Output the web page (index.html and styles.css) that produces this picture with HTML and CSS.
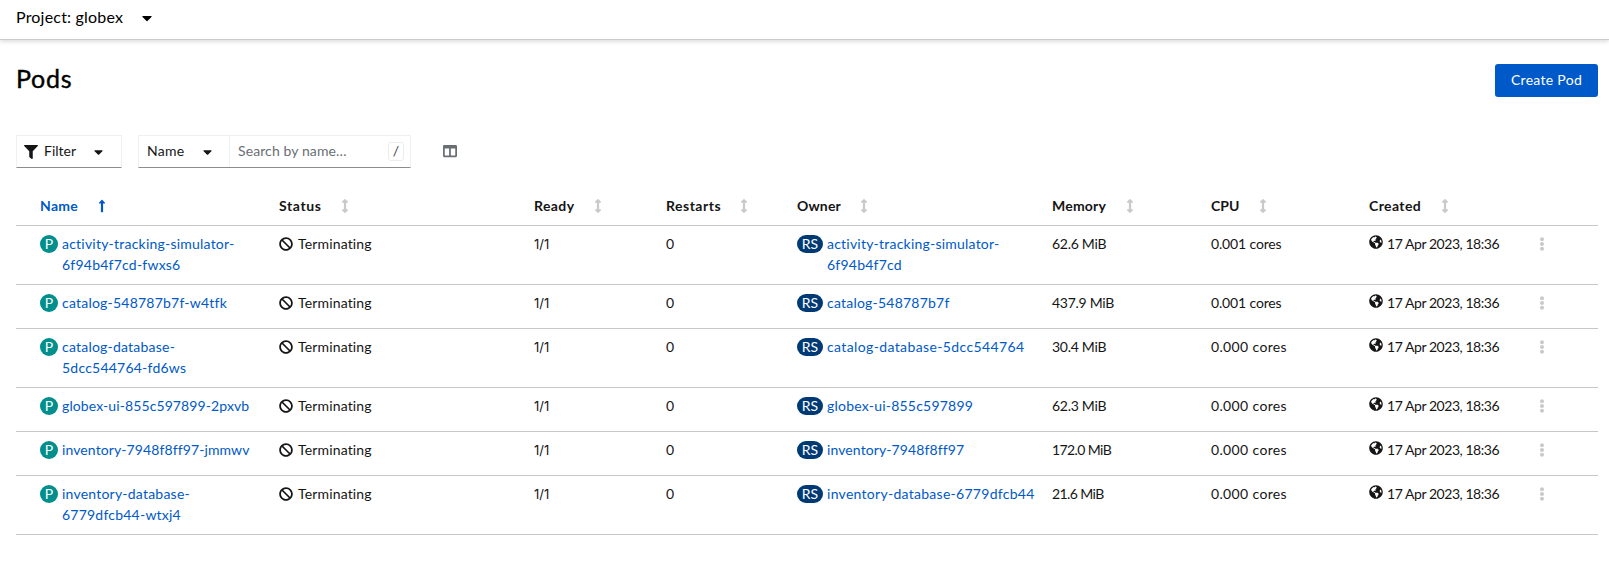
FILE: index.html
```
<!DOCTYPE html>
<html lang="en">
<head>
<meta charset="utf-8">
<title>Pods</title>
<link rel="stylesheet" href="styles.css">
</head>
<body>
<svg class="sprite" aria-hidden="true">
  <symbol id="caret" viewBox="0 0 320 512"><path d="M31.3 192h257.3c17.8 0 26.7 21.5 14.1 34.1L174.1 354.8c-7.8 7.8-20.5 7.8-28.3 0L17.2 226.1C4.6 213.5 13.5 192 31.3 192z"/></symbol>
  <symbol id="filter" viewBox="0 0 512 512"><path d="M487.976 0H24.028C2.71 0-8.047 25.866 7.058 40.971L192 225.941V432c0 7.831 3.821 15.17 10.237 19.662l80 55.98C298.02 518.69 320 507.493 320 487.98V225.941l184.947-184.97C520.021 25.896 509.338 0 487.976 0z"/></symbol>
  <symbol id="columns" viewBox="0 0 512 512"><path d="M464 32H48C21.490 32 0 53.490 0 80v352c0 26.510 21.490 48 48 48h416c26.510 0 48-21.490 48-48V80c0-26.510-21.490-48-48-48zM224 416H64V160h160v256zm224 0H288V160h160v256z"/></symbol>
  <symbol id="up" viewBox="0 0 256 512"><path d="M88 166.059V468c0 6.627 5.373 12 12 12h56c6.627 0 12-5.373 12-12V166.059h46.059c21.382 0 32.090-25.851 16.971-40.971l-86.059-86.059c-9.373-9.373-24.569-9.373-33.941 0l-86.059 86.059c-15.119 15.119-4.411 40.971 16.971 40.971H88z"/></symbol>
  <symbol id="updown" viewBox="0 0 256 512"><path d="M214.059 377.941H168V134.059h46.059c21.382 0 32.090-25.851 16.971-40.971L144.971 7.029c-9.373-9.373-24.568-9.373-33.941 0L24.971 93.088c-15.119 15.119-4.411 40.971 16.971 40.971H88v243.882H41.941c-21.382 0-32.090 25.851-16.971 40.971l86.059 86.059c9.373 9.373 24.568 9.373 33.941 0l86.059-86.059c15.120-15.119 4.412-40.971-16.970-40.971z"/></symbol>
  <symbol id="ban" viewBox="0 0 512 512"><path d="M256 8C119.034 8 8 119.033 8 256s111.034 248 248 248 248-111.034 248-248S392.967 8 256 8zm130.108 117.892c65.448 65.448 70 165.481 20.677 235.637L150.470 105.216c70.204-49.356 170.226-44.735 235.638 20.676zM125.892 386.108c-65.448-65.448-70-165.481-20.677-235.637L361.530 406.784c-70.203 49.356-170.226 44.736-235.638-20.676z"/></symbol>
  <symbol id="globe" viewBox="0 0 496 512"><path d="M248 8C111.030 8 0 119.030 0 256s111.030 248 248 248 248-111.030 248-248S384.970 8 248 8zm82.290 357.600c-3.900 3.880-7.990 7.950-11.310 11.280-2.990 3-5.100 6.700-6.170 10.710-1.510 5.660-2.730 11.380-4.770 16.870l-17.390 46.850c-13.760 3-28 4.690-42.650 4.690v-27.380c1.690-12.620-7.640-36.260-22.630-51.250-6-6-9.370-14.140-9.370-22.630v-32.010c0-11.640-6.270-22.340-16.460-27.970-14.370-7.950-34.810-19.060-48.810-26.110-11.480-5.780-22.100-13.140-31.650-21.750l-.8-.72a114.792 114.792 0 0 1-18.060-20.740c-9.380-13.770-24.660-36.420-34.590-51.140 20.470-45.500 57.360-82.040 103.200-101.890l24.010 12.010C203.480 89.740 216 82.010 216 70.110v-11.300c7.990-1.290 16.120-2.110 24.390-2.420l28.300 28.300c6.250 6.250 6.250 16.380 0 22.630L264 112l-10.340 10.340c-3.120 3.120-3.120 8.190 0 11.310l4.690 4.690c3.120 3.120 3.120 8.190 0 11.310l-8 8a8.008 8.008 0 0 1-5.660 2.340h-8.990c-2.080 0-4.080.81-5.580 2.270l-9.920 9.650a8.008 8.008 0 0 0-1.580 9.310l15.590 31.190c2.660 5.320-1.210 11.580-7.150 11.580h-5.640c-1.930 0-3.790-.7-5.240-1.960l-9.280-8.060a16.017 16.017 0 0 0-15.550-3.100l-31.170 10.390a11.950 11.950 0 0 0-8.170 11.340c0 4.530 2.560 8.660 6.610 10.690l11.080 5.540c9.410 4.710 19.790 7.160 30.310 7.160s22.590 27.290 32 32h66.750c8.490 0 16.620 3.370 22.630 9.370l13.690 13.690a30.503 30.503 0 0 1 8.930 21.570 46.536 46.536 0 0 1-13.720 32.980zM417 274.250c-5.790-1.450-10.840-5-14.150-9.970l-17.980-26.970a23.970 23.970 0 0 1 0-26.620l19.590-29.380c2.320-3.470 5.500-6.290 9.240-8.150l12.980-6.490C440.200 193.590 448 223.870 448 256c0 8.670-.74 17.160-1.820 25.540L417 274.250z"/></symbol>
  <symbol id="kebab" viewBox="0 0 192 512"><path d="M96 184c39.800 0 72 32.200 72 72s-32.200 72-72 72-72-32.200-72-72 32.200-72 72-72zM24 80c0 39.800 32.200 72 72 72s72-32.200 72-72S135.800 8 96 8 24 40.200 24 80zm0 352c0 39.800 32.200 72 72 72s72-32.200 72-72-32.200-72-72-72-72 32.200-72 72z"/></symbol>
</svg>

<div class="project-bar"><span class="project-name">Project: globex</span><svg class="caret caret-lg"><use href="#caret"/></svg></div>

<header class="page-header">
  <h1>Pods</h1>
  <button class="btn-primary">Create Pod</button>
</header>

<div class="toolbar">
  <div class="control filter"><svg class="i14"><use href="#filter"/></svg><span class="filter-label">Filter</span><svg class="caret"><use href="#caret"/></svg></div>
  <div class="control search">
    <div class="search-kind"><span>Name</span><svg class="caret"><use href="#caret"/></svg></div>
    <div class="search-field"><span class="placeholder">Search by name…</span><kbd>/</kbd></div>
  </div>
  <svg class="columns"><use href="#columns"/></svg>
</div>

<table class="pods">
  <colgroup><col class="c-name"><col class="c-status"><col class="c-ready"><col class="c-restarts"><col class="c-owner"><col class="c-memory"><col class="c-cpu"><col class="c-created"><col class="c-actions"></colgroup>
  <thead>
    <tr>
      <th class="sorted"><span class="h-name">Name</span><svg class="sort"><use href="#up"/></svg></th>
      <th><span class="h-status">Status</span><svg class="sort"><use href="#updown"/></svg></th>
      <th><span class="h-ready">Ready</span><svg class="sort"><use href="#updown"/></svg></th>
      <th><span class="h-restarts">Restarts</span><svg class="sort"><use href="#updown"/></svg></th>
      <th><span class="h-owner">Owner</span><svg class="sort"><use href="#updown"/></svg></th>
      <th><span class="h-memory">Memory</span><svg class="sort"><use href="#updown"/></svg></th>
      <th><span class="h-cpu">CPU</span><svg class="sort"><use href="#updown"/></svg></th>
      <th><span class="h-created">Created</span><svg class="sort"><use href="#updown"/></svg></th>
      <th></th>
    </tr>
  </thead>
  <tbody>
    <tr>
      <td><div class="res"><span class="badge pod">P</span><a>activity-tracking-simulator-<br>6f94b4f7cd-fwxs6</a></div></td>
      <td><div class="status"><svg class="i14"><use href="#ban"/></svg>Terminating</div></td>
      <td class="ready">1/1</td><td class="restarts">0</td>
      <td><div class="res"><span class="badge rs">RS</span><a>activity-tracking-simulator-<br>6f94b4f7cd</a></div></td>
      <td class="memory">62.6 MiB</td><td class="cpu narrow">0.001 cores</td>
      <td><div class="created"><svg class="i14"><use href="#globe"/></svg>17 Apr 2023, 18:36</div></td>
      <td><svg class="kebab"><use href="#kebab"/></svg></td>
    </tr>
    <tr>
      <td><div class="res"><span class="badge pod">P</span><a>catalog-548787b7f-w4tfk</a></div></td>
      <td><div class="status"><svg class="i14"><use href="#ban"/></svg>Terminating</div></td>
      <td class="ready">1/1</td><td class="restarts">0</td>
      <td><div class="res"><span class="badge rs">RS</span><a>catalog-548787b7f</a></div></td>
      <td class="memory">437.9 MiB</td><td class="cpu narrow">0.001 cores</td>
      <td><div class="created"><svg class="i14"><use href="#globe"/></svg>17 Apr 2023, 18:36</div></td>
      <td><svg class="kebab"><use href="#kebab"/></svg></td>
    </tr>
    <tr>
      <td><div class="res"><span class="badge pod">P</span><a>catalog-database-<br>5dcc544764-fd6ws</a></div></td>
      <td><div class="status"><svg class="i14"><use href="#ban"/></svg>Terminating</div></td>
      <td class="ready">1/1</td><td class="restarts">0</td>
      <td><div class="res"><span class="badge rs">RS</span><a class="wide">catalog-database-5dcc544764</a></div></td>
      <td class="memory">30.4 MiB</td><td class="cpu">0.000 cores</td>
      <td><div class="created"><svg class="i14"><use href="#globe"/></svg>17 Apr 2023, 18:36</div></td>
      <td><svg class="kebab"><use href="#kebab"/></svg></td>
    </tr>
    <tr>
      <td><div class="res"><span class="badge pod">P</span><a class="tight">globex-ui-855c597899-2pxvb</a></div></td>
      <td><div class="status"><svg class="i14"><use href="#ban"/></svg>Terminating</div></td>
      <td class="ready">1/1</td><td class="restarts">0</td>
      <td><div class="res"><span class="badge rs">RS</span><a>globex-ui-855c597899</a></div></td>
      <td class="memory">62.3 MiB</td><td class="cpu">0.000 cores</td>
      <td><div class="created"><svg class="i14"><use href="#globe"/></svg>17 Apr 2023, 18:36</div></td>
      <td><svg class="kebab"><use href="#kebab"/></svg></td>
    </tr>
    <tr>
      <td><div class="res"><span class="badge pod">P</span><a class="tight">inventory-7948f8ff97-jmmwv</a></div></td>
      <td><div class="status"><svg class="i14"><use href="#ban"/></svg>Terminating</div></td>
      <td class="ready">1/1</td><td class="restarts">0</td>
      <td><div class="res"><span class="badge rs">RS</span><a class="tight">inventory-7948f8ff97</a></div></td>
      <td class="memory narrow">172.0 MiB</td><td class="cpu">0.000 cores</td>
      <td><div class="created"><svg class="i14"><use href="#globe"/></svg>17 Apr 2023, 18:36</div></td>
      <td><svg class="kebab"><use href="#kebab"/></svg></td>
    </tr>
    <tr>
      <td><div class="res"><span class="badge pod">P</span><a>inventory-database-<br>6779dfcb44-wtxj4</a></div></td>
      <td><div class="status"><svg class="i14"><use href="#ban"/></svg>Terminating</div></td>
      <td class="ready">1/1</td><td class="restarts">0</td>
      <td><div class="res"><span class="badge rs">RS</span><a class="owner-long">inventory-database-6779dfcb44</a></div></td>
      <td class="memory narrow">21.6 MiB</td><td class="cpu">0.000 cores</td>
      <td><div class="created"><svg class="i14"><use href="#globe"/></svg>17 Apr 2023, 18:36</div></td>
      <td><svg class="kebab"><use href="#kebab"/></svg></td>
    </tr>
  </tbody>
</table>
</body>
</html>
```
FILE: styles.css
```
* { box-sizing: border-box; }
body {
  margin: 0;
  height: 581px;
  overflow: hidden;
  background: #fff;
  color: #151515;
  font: 14px/21px Lato, "Open Sans", sans-serif;
  font-variant-ligatures: none;
}
svg { display: block; fill: currentColor; flex: none; }
.sprite { position: absolute; width: 0; height: 0; }
.caret { width: 9px; height: 14px; }
.caret-lg { width: 10px; height: 16px; }
.i14 { width: 14px; height: 14px; }

.project-bar {
  display: flex;
  align-items: center;
  height: 40px;
  padding: 0 16px 4px;
  border-bottom: 1px solid #c9cacb;
  box-shadow: 0 2px 4px rgba(3, 3, 3, .13);
  font-size: 16px;
  letter-spacing: .2px;
  color: #000;
}
.project-name { width: 126px; padding-bottom: 2px; }

.page-header {
  display: flex;
  justify-content: space-between;
  align-items: flex-start;
  padding: 24px 11px 0 16px;
  height: 95px;
}
h1 { margin: 0; font-size: 25px; line-height: 29px; font-weight: 400; letter-spacing: .7px; color: #000; -webkit-text-stroke: .4px #000; }
.btn-primary {
  width: 103px;
  height: 33px;
  padding: 0 0 2px;
  border: 0;
  border-radius: 3px;
  background: #0059c8;
  color: #fff;
  font: inherit;
  letter-spacing: .3px;
}

.toolbar { display: flex; padding-left: 16px; height: 46px; }
.control { display: flex; height: 33px; border: 1px solid #f0f0f0; border-bottom-color: #8a8d90; }
.filter { width: 106px; align-items: center; padding-left: 7px; margin-right: 16px; }
.filter-label { width: 50px; margin-left: 6px; padding-bottom: 2px; }
.search { width: 273px; }
.search-kind { display: flex; align-items: center; width: 91px; padding-left: 8px; border-right: 1px solid #f0f0f0; letter-spacing: .3px; }
.search-kind span { width: 56px; padding-bottom: 2px; }
.search-kind .caret { margin-top: 1px; }
.search-field { display: flex; flex: 1; align-items: center; justify-content: space-between; padding: 0 6px 0 8px; color: #6a6e73; }
.placeholder { letter-spacing: .1px; padding-bottom: 2px; }
kbd { width: 16px; height: 19px; margin-bottom: 1px; border: 1px solid #ededed; border-radius: 3px; text-align: center; font: 14px/16px Lato, sans-serif; color: #444; }
.columns { width: 14px; height: 14px; margin: 9px 0 0 32px; color: #6a6e73; }

.pods { width: 1582px; margin-left: 16px; border-collapse: separate; border-spacing: 0; table-layout: fixed; }
.c-name { width: 255px; }
.c-status { width: 255px; }
.c-ready { width: 132px; }
.c-restarts { width: 131px; }
.c-owner { width: 255px; }
.c-memory { width: 159px; }
.c-cpu { width: 158px; }
.c-created { width: 167px; }
.c-actions { width: 70px; }
th, td { padding: 0 0 0 8px; border-bottom: 1px solid #c7c7c7; text-align: left; white-space: nowrap; }
th:first-child, td:first-child { padding-left: 24px; }
th { height: 45px; padding-top: 1px; vertical-align: top; font-weight: 700; }
th span { display: inline-block; vertical-align: middle; margin: 13px 17px 0 0; }
th .sort { display: inline-block; vertical-align: middle; margin-top: 14px; width: 14px; height: 14px; color: #c9c9c9; }
th.sorted, th.sorted .sort { color: #0059c8; }
.h-name { letter-spacing: .3px; }
.h-status { letter-spacing: .6px; }
.h-ready { letter-spacing: .4px; }
th .h-restarts { letter-spacing: .5px; margin-right: 16px; }
th .h-owner { letter-spacing: .15px; margin-right: 16px; }
.h-memory { letter-spacing: .2px; }
.h-created { letter-spacing: .4px; }

td { height: 44px; padding-top: 7px; padding-bottom: 9px; vertical-align: top; }
.res { display: flex; letter-spacing: .22px; color: #0059c8; }
.wide { letter-spacing: .38px; }
.tight { letter-spacing: .1px; }
.owner-long { letter-spacing: .28px; }
.badge { height: 18px; margin: 2px 4px 0 0; border-radius: 9px; color: #fff; font-size: 14px; line-height: 18px; text-align: center; letter-spacing: 0; }
.pod { width: 18px; background: #008f8c; }
.rs { width: 26px; background: #003a75; }
.status, .created { display: flex; }
.status { letter-spacing: .15px; }
.status svg { margin: 4px 5px 0 0; }
.created { letter-spacing: -.45px; }
.created svg { margin: 2px 4px 0 0; }
td.ready { padding-top: 8px; padding-bottom: 8px; font-family: Inter, sans-serif; font-size: 13px; }
.memory { letter-spacing: -.28px; }
.memory.narrow { letter-spacing: -.6px; }
.cpu { letter-spacing: .35px; }
.cpu.narrow { letter-spacing: -.15px; }
.kebab { width: 14px; height: 14px; margin: 4px 0 0 -1px; color: #c9c9c9; }
```
